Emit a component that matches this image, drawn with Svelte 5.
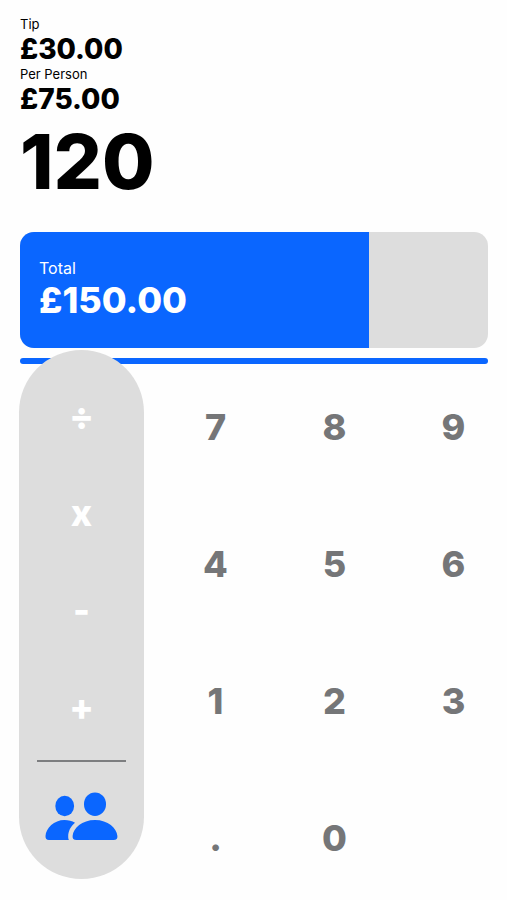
<script lang="ts">
	let entry = '120';
	let tip = 30;
	let people = 2;
	let fill = 74.6;

	const operators = [
		{ sign: '÷', name: 'Divide' },
		{ sign: 'x', name: 'Multiply' },
		{ sign: '-', name: 'Subtract' },
		{ sign: '+', name: 'Add' }
	];
	const keys = ['7', '8', '9', '4', '5', '6', '1', '2', '3', '.', '0'];

	$: total = (parseFloat(entry) || 0) + tip;

	const money = (n: number) => '£' + n.toFixed(2);

	let fresh = true;

	function press(key: string) {
		if (key === '.' && !fresh && entry.includes('.')) return;
		entry = fresh ? key : entry + key;
		fresh = false;
	}
</script>

<main>
	<header>
		<p class="label">Tip</p>
		<p class="amount">{money(tip)}</p>
		<p class="label">Per Person</p>
		<p class="amount">{money(total / people)}</p>
		<output class="entry">{entry}</output>
	</header>

	<section class="total">
		<div class="fill" style="width: {fill}%">
			<p class="total-label">Total</p>
			<p class="total-amount">{money(total)}</p>
		</div>
	</section>

	<div class="line"></div>

	<section class="controls">
		<div class="operators">
			{#each operators as op}
				<button class="operator" aria-label={op.name}>{op.sign}</button>
			{/each}
			<hr />
			<button class="people" aria-label="Split between people" on:click={() => (people += 1)}>
				<svg viewBox="0 0 73 49" width="73" height="49" fill="#0a66ff">
					<ellipse cx="19.7" cy="14" rx="9.4" ry="10.2" />
					<path d="M4 48C1.5 48 .4 46.400 .5 44C1 36 9 28 19.500 28C23.500 28 27 29 30 30.800C25.500 34.500 23.200 39.500 23.200 44.500C23.200 46 23.400 47 23.900 48Z" />
					<ellipse cx="50" cy="12.200" rx="11" ry="11.800" />
					<path d="M31.500 48C28.500 48 27.400 46.500 27.600 44C28.200 36 37 28 50 28C63 28 71.800 36 72.400 44C72.600 46.500 71.500 48 68.500 48Z" />
				</svg>
			</button>
		</div>

		<div class="keypad">
			{#each keys as key}
				<button class="key" on:click={() => press(key)}>{key}</button>
			{/each}
		</div>
	</section>
</main>

<style>
	:global(body) {
		margin: 0;
		background: #fefefe;
	}

	main {
		box-sizing: border-box;
		padding: 16px 19px 20px 20px;
		font-family: Inter, 'Liberation Sans', sans-serif;
		color: #000;
	}

	p {
		margin: 0;
	}

	button {
		padding: 0;
		border: 0;
		background: none;
		font-family: inherit;
		cursor: pointer;
	}

	.label {
		font-size: 13px;
		line-height: 16px;
	}

	.amount {
		font-size: 28px;
		font-weight: 800;
		line-height: 34px;
	}

	.entry {
		display: block;
		font-size: 76px;
		font-weight: 800;
		line-height: 90px;
	}

	.total {
		display: flex;
		height: 116px;
		margin-top: 26px;
		border-radius: 14px;
		background: #ddd;
		overflow: hidden;
	}

	.fill {
		display: flex;
		flex-direction: column;
		justify-content: center;
		box-sizing: border-box;
		padding-left: 19px;
		background: #0a66ff;
		color: #fff;
	}

	.total-label {
		font-size: 16px;
		line-height: 20px;
	}

	.total-amount {
		font-size: 36px;
		font-weight: 800;
		line-height: 44px;
	}

	.line {
		height: 6px;
		margin-top: 10px;
		border-radius: 3px;
		background: #0a66ff;
	}

	.controls {
		display: flex;
		gap: 37px;
		margin-top: -14px;
	}

	.operators {
		display: flex;
		flex-direction: column;
		flex: none;
		box-sizing: border-box;
		width: 125px;
		margin-left: -1px;
		padding: 17px 18px 36px;
		border-radius: 63px;
		background: #ddd;
	}

	.operator {
		height: 97px;
		color: #fff;
		font-size: 36px;
		font-weight: 800;
		line-height: 44px;
	}

	hr {
		width: 100%;
		height: 2px;
		margin: 5px 0 30px;
		border: 0;
		background: #7d7e80;
	}

	.people {
		display: flex;
		justify-content: center;
	}

	.keypad {
		display: grid;
		flex: 1;
		grid-template-columns: repeat(3, 1fr);
		grid-auto-rows: 82px;
		gap: 55px 50px;
		padding-top: 36px;
	}

	.key {
		color: #757678;
		font-size: 36px;
		font-weight: 800;
		line-height: 44px;
	}
</style>
